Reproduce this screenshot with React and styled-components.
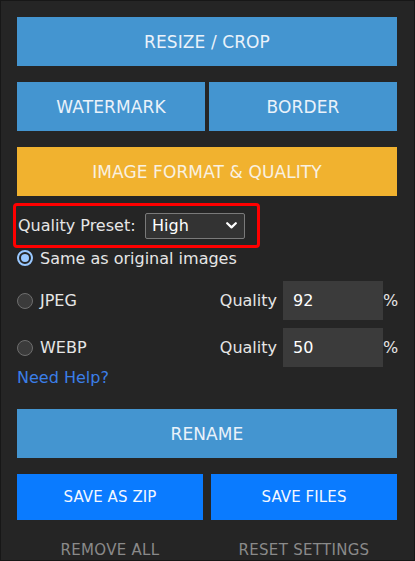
import React from 'react';
import styled, { createGlobalStyle } from 'styled-components';

const GlobalStyle = createGlobalStyle`
  html, body {
    margin: 0;
    padding: 0;
    background: #252525;
  }
  * { box-sizing: border-box; }
`;

const Panel = styled.div`
  width: 415px;
  height: 561px;
  background: #252525;
  border: 1px solid #171717;
  padding: 16px 17px 0 16px;
  display: flex;
  flex-direction: column;
  font-family: "DejaVu Sans", "Liberation Sans", sans-serif;
  color: #e6e6e6;
  overflow: hidden;
`;

const Button = styled.button`
  border: none;
  border-radius: 0;
  margin: 0;
  padding: 0;
  height: ${p => p.$h || 49}px;
  background: ${p => p.$bg || '#4495d0'};
  color: ${p => p.$fg || '#eaf2fa'};
  font-family: inherit;
  font-size: ${p => p.$size || 17}px;
  letter-spacing: 0.1px;
  width: 100%;
  cursor: pointer;
`;

const Pair = styled.div`
  display: grid;
  grid-template-columns: ${p => (p.$single ? '1fr' : '1fr 1fr')};
  column-gap: ${p => p.$gap || 4}px;
  margin-top: ${p => p.$top || 0}px;
`;

const Highlight = styled.div`
  align-self: flex-start;
  margin: 7px 0 0 -4px;
  width: 247px;
  height: 45px;
  border: 3px solid #ff0000;
  border-radius: 4px;
  display: flex;
  align-items: center;
  padding: 0 12px 0 2px;
  font-size: 16px;
`;

const SelectBox = styled.div`
  margin-left: auto;
  width: 100px;
  height: 26px;
  background: #333333;
  border: 1px solid #7a7a7a;
  border-radius: 2px;
  display: flex;
  align-items: center;
  justify-content: space-between;
  padding: 0 7px 0 6px;
  color: #ffffff;
  font-size: 16px;
`;

const RadioRow = styled.label`
  display: flex;
  align-items: center;
  height: ${p => p.$h || 20}px;
  margin-top: ${p => p.$top || 0}px;
  font-size: 16px;
`;

const Radio = styled.span`
  width: 16px;
  height: 16px;
  border-radius: 50%;
  flex: none;
  margin-right: 7px;
  border: ${p => (p.$on ? '2px solid #99c8ff' : '1px solid #6e6e6e')};
  background: ${p => (p.$on ? '#252525' : '#3b3b3b')};
  display: flex;
  align-items: center;
  justify-content: center;

  &::after {
    content: '';
    display: ${p => (p.$on ? 'block' : 'none')};
    width: 8px;
    height: 8px;
    border-radius: 50%;
    background: #99c8ff;
  }
`;

const Spacer = styled.span`
  flex: 1;
`;

const QualityLabel = styled.span`
  margin-right: 6px;
`;

const NumberInput = styled.input`
  width: 100px;
  height: 39px;
  border: none;
  outline: none;
  background: #3b3b3b;
  color: #ffffff;
  font-family: inherit;
  font-size: 16px;
  padding: 0 0 0 10px;
`;

const Percent = styled.span`
  width: 14px;
  text-align: right;
`;

const HelpLink = styled.a`
  display: block;
  margin-top: 1px;
  line-height: 20px;
  font-size: 16px;
  color: #3b7fe8;
  text-decoration: none;
`;

const FootLink = styled.span`
  text-align: center;
  color: #8a8a8a;
  font-size: 15px;
  letter-spacing: 0.3px;
  line-height: 20px;
`;

function Chevron() {
  return (
    <svg width="11" height="7" viewBox="0 0 11 7">
      <path d="M1.2 1.2 L5.5 5.4 L9.8 1.2" fill="none" stroke="#ffffff" strokeWidth="2.2" strokeLinecap="round" strokeLinejoin="round" />
    </svg>
  );
}

function FormatRow({ name, value, top }) {
  return (
    <RadioRow $h={39} $top={top}>
      <Radio />
      {name}
      <Spacer />
      <QualityLabel>Quality</QualityLabel>
      <NumberInput defaultValue={value} />
      <Percent>%</Percent>
    </RadioRow>
  );
}

export default function App() {
  return (
    <>
      <GlobalStyle />
      <Panel>
        <Button>RESIZE / CROP</Button>
        <Pair $top={16}>
          <Button>WATERMARK</Button>
          <Button>BORDER</Button>
        </Pair>
        <Pair $top={16} $single>
          <Button $bg="#f1b22f" $fg="#f9f1e1">IMAGE FORMAT &amp; QUALITY</Button>
        </Pair>
        <Highlight>
          Quality Preset:
          <SelectBox>
            High
            <Chevron />
          </SelectBox>
        </Highlight>
        <RadioRow>
          <Radio $on />
          Same as original images
        </RadioRow>
        <FormatRow name="JPEG" value="92" top={13} />
        <FormatRow name="WEBP" value="50" top={8} />
        <HelpLink href="#">Need Help?</HelpLink>
        <Pair $top={21} $single>
          <Button>RENAME</Button>
        </Pair>
        <Pair $top={16} $gap={8}>
          <Button $h={46} $bg="#0a7bff" $fg="#f2f7ff" $size={15}>SAVE AS ZIP</Button>
          <Button $h={46} $bg="#0a7bff" $fg="#f2f7ff" $size={15}>SAVE FILES</Button>
        </Pair>
        <Pair $top={20} $gap={8}>
          <FootLink>REMOVE ALL</FootLink>
          <FootLink>RESET SETTINGS</FootLink>
        </Pair>
      </Panel>
    </>
  );
}
